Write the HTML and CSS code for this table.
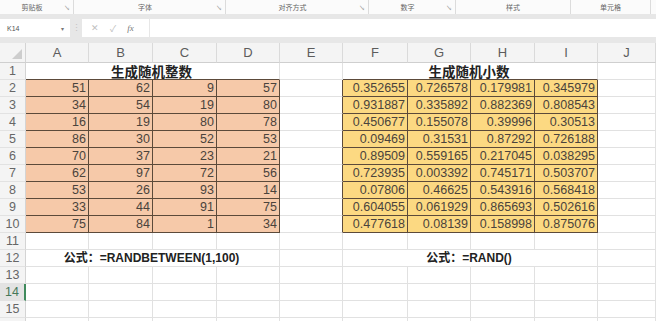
FILE: index.html
```html
<!DOCTYPE html>
<html lang="zh-CN">
<head>
    <meta charset="UTF-8">
    <meta name="viewport" content="width=device-width, initial-scale=1.0">
    <title>生成随机数</title>
    <link rel="stylesheet" href="styles.css">
</head>
<body>
    <div class="top">
        <div class="ribbon">
            <div class="group g-clip"><span class="label">剪贴板</span><span class="launcher">↘</span></div>
            <div class="group g-font"><span class="label">字体</span><span class="launcher">↘</span></div>
            <div class="group g-align"><span class="label">对齐方式</span><span class="launcher">↘</span></div>
            <div class="group g-num"><span class="label">数字</span><span class="launcher">↘</span></div>
            <div class="group g-style"><span class="label">样式</span></div>
            <div class="group g-cells"><span class="label">单元格</span></div>
            <div class="group g-rest"></div>
        </div>

        <div class="formula-bar">
            <div class="name-box"><span>K14</span><span class="drop">▾</span></div>
            <div class="grip">⋮</div>
            <div class="fx-box"><span class="fx-btn">✕</span><span class="fx-btn">✓</span><span class="fx-btn fx">fx</span></div>
            <div class="input"></div>
        </div>
    </div>

    <div class="sheet">
        <div class="row head">
            <div class="corner"></div>
            <div class="col c-a">A</div><div class="col c-b">B</div><div class="col c-c">C</div><div class="col c-d">D</div><div class="col c-e">E</div>
            <div class="col c-f">F</div><div class="col c-g">G</div><div class="col c-h">H</div><div class="col c-i">I</div><div class="col c-j">J</div>
        </div>

        <div class="row">
            <div class="rh">1</div>
            <div class="cell title ints">生成随机整数</div><div class="cell c-e"></div>
            <div class="cell title decs">生成随机小数</div><div class="cell c-j"></div>
        </div>

        <div class="row">
            <div class="rh">2</div>
            <div class="cell o c-a">51</div><div class="cell o c-b">62</div><div class="cell o c-c">9</div><div class="cell o c-d">57</div><div class="cell c-e edge"></div>
            <div class="cell y c-f">0.352655</div><div class="cell y c-g">0.726578</div><div class="cell y c-h">0.179981</div><div class="cell y c-i">0.345979</div><div class="cell c-j"></div>
        </div>
        <div class="row">
            <div class="rh">3</div>
            <div class="cell o c-a">34</div><div class="cell o c-b">54</div><div class="cell o c-c">19</div><div class="cell o c-d">80</div><div class="cell c-e edge"></div>
            <div class="cell y c-f">0.931887</div><div class="cell y c-g">0.335892</div><div class="cell y c-h">0.882369</div><div class="cell y c-i">0.808543</div><div class="cell c-j"></div>
        </div>
        <div class="row">
            <div class="rh">4</div>
            <div class="cell o c-a">16</div><div class="cell o c-b">19</div><div class="cell o c-c">80</div><div class="cell o c-d">78</div><div class="cell c-e edge"></div>
            <div class="cell y c-f">0.450677</div><div class="cell y c-g">0.155078</div><div class="cell y c-h">0.39996</div><div class="cell y c-i">0.30513</div><div class="cell c-j"></div>
        </div>
        <div class="row">
            <div class="rh">5</div>
            <div class="cell o c-a">86</div><div class="cell o c-b">30</div><div class="cell o c-c">52</div><div class="cell o c-d">53</div><div class="cell c-e edge"></div>
            <div class="cell y c-f">0.09469</div><div class="cell y c-g">0.31531</div><div class="cell y c-h">0.87292</div><div class="cell y c-i">0.726188</div><div class="cell c-j"></div>
        </div>
        <div class="row">
            <div class="rh">6</div>
            <div class="cell o c-a">70</div><div class="cell o c-b">37</div><div class="cell o c-c">23</div><div class="cell o c-d">21</div><div class="cell c-e edge"></div>
            <div class="cell y c-f">0.89509</div><div class="cell y c-g">0.559165</div><div class="cell y c-h">0.217045</div><div class="cell y c-i">0.038295</div><div class="cell c-j"></div>
        </div>
        <div class="row">
            <div class="rh">7</div>
            <div class="cell o c-a">62</div><div class="cell o c-b">97</div><div class="cell o c-c">72</div><div class="cell o c-d">56</div><div class="cell c-e edge"></div>
            <div class="cell y c-f">0.723935</div><div class="cell y c-g">0.003392</div><div class="cell y c-h">0.745171</div><div class="cell y c-i">0.503707</div><div class="cell c-j"></div>
        </div>
        <div class="row">
            <div class="rh">8</div>
            <div class="cell o c-a">53</div><div class="cell o c-b">26</div><div class="cell o c-c">93</div><div class="cell o c-d">14</div><div class="cell c-e edge"></div>
            <div class="cell y c-f">0.07806</div><div class="cell y c-g">0.46625</div><div class="cell y c-h">0.543916</div><div class="cell y c-i">0.568418</div><div class="cell c-j"></div>
        </div>
        <div class="row">
            <div class="rh">9</div>
            <div class="cell o c-a">33</div><div class="cell o c-b">44</div><div class="cell o c-c">91</div><div class="cell o c-d">75</div><div class="cell c-e edge"></div>
            <div class="cell y c-f">0.604055</div><div class="cell y c-g">0.061929</div><div class="cell y c-h">0.865693</div><div class="cell y c-i">0.502616</div><div class="cell c-j"></div>
        </div>
        <div class="row">
            <div class="rh">10</div>
            <div class="cell o c-a">75</div><div class="cell o c-b">84</div><div class="cell o c-c">1</div><div class="cell o c-d">34</div><div class="cell c-e edge"></div>
            <div class="cell y c-f">0.477618</div><div class="cell y c-g">0.08139</div><div class="cell y c-h">0.158998</div><div class="cell y c-i">0.875076</div><div class="cell c-j"></div>
        </div>

        <div class="row">
            <div class="rh">11</div>
            <div class="cell c-a"></div><div class="cell c-b"></div><div class="cell c-c"></div><div class="cell c-d"></div><div class="cell c-e"></div>
            <div class="cell c-f"></div><div class="cell c-g"></div><div class="cell c-h"></div><div class="cell c-i"></div><div class="cell c-j"></div>
        </div>
        <div class="row">
            <div class="rh">12</div>
            <div class="cell note ints">公式：=RANDBETWEEN(1,100)</div><div class="cell c-e"></div>
            <div class="cell note decs">公式：=RAND()</div><div class="cell c-j"></div>
        </div>
        <div class="row">
            <div class="rh">13</div>
            <div class="cell c-a"></div><div class="cell c-b"></div><div class="cell c-c"></div><div class="cell c-d"></div><div class="cell c-e"></div>
            <div class="cell c-f"></div><div class="cell c-g"></div><div class="cell c-h"></div><div class="cell c-i"></div><div class="cell c-j"></div>
        </div>
        <div class="row">
            <div class="rh active">14</div>
            <div class="cell c-a"></div><div class="cell c-b"></div><div class="cell c-c"></div><div class="cell c-d"></div><div class="cell c-e"></div>
            <div class="cell c-f"></div><div class="cell c-g"></div><div class="cell c-h"></div><div class="cell c-i"></div><div class="cell c-j"></div>
        </div>
        <div class="row">
            <div class="rh">15</div>
            <div class="cell c-a"></div><div class="cell c-b"></div><div class="cell c-c"></div><div class="cell c-d"></div><div class="cell c-e"></div>
            <div class="cell c-f"></div><div class="cell c-g"></div><div class="cell c-h"></div><div class="cell c-i"></div><div class="cell c-j"></div>
        </div>
        <div class="row tail">
            <div class="rh"></div>
            <div class="cell c-a"></div><div class="cell c-b"></div><div class="cell c-c"></div><div class="cell c-d"></div><div class="cell c-e"></div>
            <div class="cell c-f"></div><div class="cell c-g"></div><div class="cell c-h"></div><div class="cell c-i"></div><div class="cell c-j"></div>
        </div>
    </div>
</body>
</html>
```

FILE: styles.css
```css
body {
    margin: 0;
    width: 656px;
    height: 321px;
    overflow: hidden;
    background-color: #fff;
    font-family: "Liberation Sans", "Noto Sans CJK SC", sans-serif;
}

.top {
    background-color: #e7e7e7;
    padding-bottom: 6px;
}

/* -- Ribbon group labels -- */

.ribbon {
    display: flex;
    height: 14px;
    background-color: #fbfbfb;
    font-family: "Noto Sans CJK SC", sans-serif;
    font-size: 7px;
    color: #666;
}

.group {
    display: flex;
    align-items: center;
    border-right: 1px solid #dcdcdc;
    box-sizing: border-box;
}

.group .label {
    flex: 1;
    text-align: center;
}

.launcher {
    width: 9px;
    font-size: 6px;
    color: #a0a0a0;
}

.g-clip { width: 74px; }
.g-font { width: 152px; }
.g-align { width: 143px; }
.g-num { width: 87px; }
.g-style { width: 115px; }
.g-cells { width: 80px; }
.g-rest { flex: 1; border-right: none; }

/* -- Name box and formula input -- */

.formula-bar {
    display: flex;
    height: 18px;
    margin-top: 5px;
    font-size: 7px;
    color: #555;
}

.name-box {
    display: flex;
    align-items: center;
    justify-content: space-between;
    width: 70px;
    padding: 0 6px 0 7px;
    box-sizing: border-box;
    background-color: #fff;
}

.name-box .drop {
    font-size: 6px;
    color: #777;
}

.grip {
    width: 12px;
    text-align: center;
    line-height: 18px;
    color: #c4c4c4;
    font-size: 9px;
}

.fx-box {
    display: flex;
    align-items: center;
    gap: 11px;
    width: 67px;
    padding-left: 9px;
    box-sizing: border-box;
    background-color: #fff;
}

.fx-btn {
    font-size: 9px;
    color: #c0c0c0;
}

.fx-btn.fx {
    font-family: "Liberation Serif", serif;
    font-style: italic;
    color: #777;
}

.input {
    flex: 1;
    margin-left: 1px;
    background-color: #fff;
}

/* -- Sheet grid -- */

.row {
    display: flex;
    height: 17px;
}

.row.head {
    height: 20px;
    background-color: #f4f4f4;
}

.corner {
    position: relative;
    width: 26px;
    flex: none;
    box-sizing: border-box;
    border-right: 1px solid #d4d4d4;
    border-bottom: 1px solid #cfcfcf;
}

.corner::after {
    content: "";
    position: absolute;
    right: 3px;
    bottom: 3px;
    border-left: 10px solid transparent;
    border-bottom: 10px solid #cdcdcd;
}

.col {
    flex: none;
    box-sizing: border-box;
    border-right: 1px solid #dadada;
    border-bottom: 1px solid #cfcfcf;
    text-align: center;
    font-size: 13px;
    line-height: 20px;
    color: #5c5c5c;
}

.rh {
    width: 26px;
    flex: none;
    box-sizing: border-box;
    background-color: #f4f4f4;
    border-right: 1px solid #d4d4d4;
    border-bottom: 1px solid #e2e2e2;
    text-align: center;
    font-size: 12.5px;
    line-height: 16px;
    color: #666;
}

.rh.active {
    background-color: #e3e3e3;
    border-right: 2px solid #3f8a5c;
    color: #46785a;
}

.cell {
    flex: none;
    box-sizing: border-box;
    border-right: 1px solid #e1e1e1;
    border-bottom: 1px solid #e1e1e1;
    padding-right: 2px;
    text-align: right;
    font-size: 12.5px;
    line-height: 16px;
    color: #4a433c;
    white-space: nowrap;
}

.c-a { width: 63px; }
.c-b { width: 64px; }
.c-c { width: 64px; }
.c-d { width: 63px; }
.c-e { width: 63px; }
.c-f { width: 65px; }
.c-g { width: 63px; }
.c-h { width: 64px; }
.c-i { width: 63px; }
.c-j { flex: 1; }

/* merged A:D and F:I */
.ints { width: 254px; }
.decs { width: 255px; }

.title {
    text-align: center;
    font-family: "Noto Sans CJK SC", sans-serif;
    font-weight: bold;
    font-size: 13.5px;
    color: #222;
    border-bottom-color: #5c4a3a;
}

.note {
    text-align: center;
    font-family: "Liberation Sans", "Noto Sans CJK SC", sans-serif;
    font-weight: bold;
    font-size: 12px;
    color: #222;
}

.cell.o {
    background-color: #f6c9a9;
    border-color: #5c4a3a;
}

.cell.y {
    background-color: #fcd982;
    border-color: #5c4a3a;
}

.cell.edge {
    border-right-color: #5c4a3a;
}
```
